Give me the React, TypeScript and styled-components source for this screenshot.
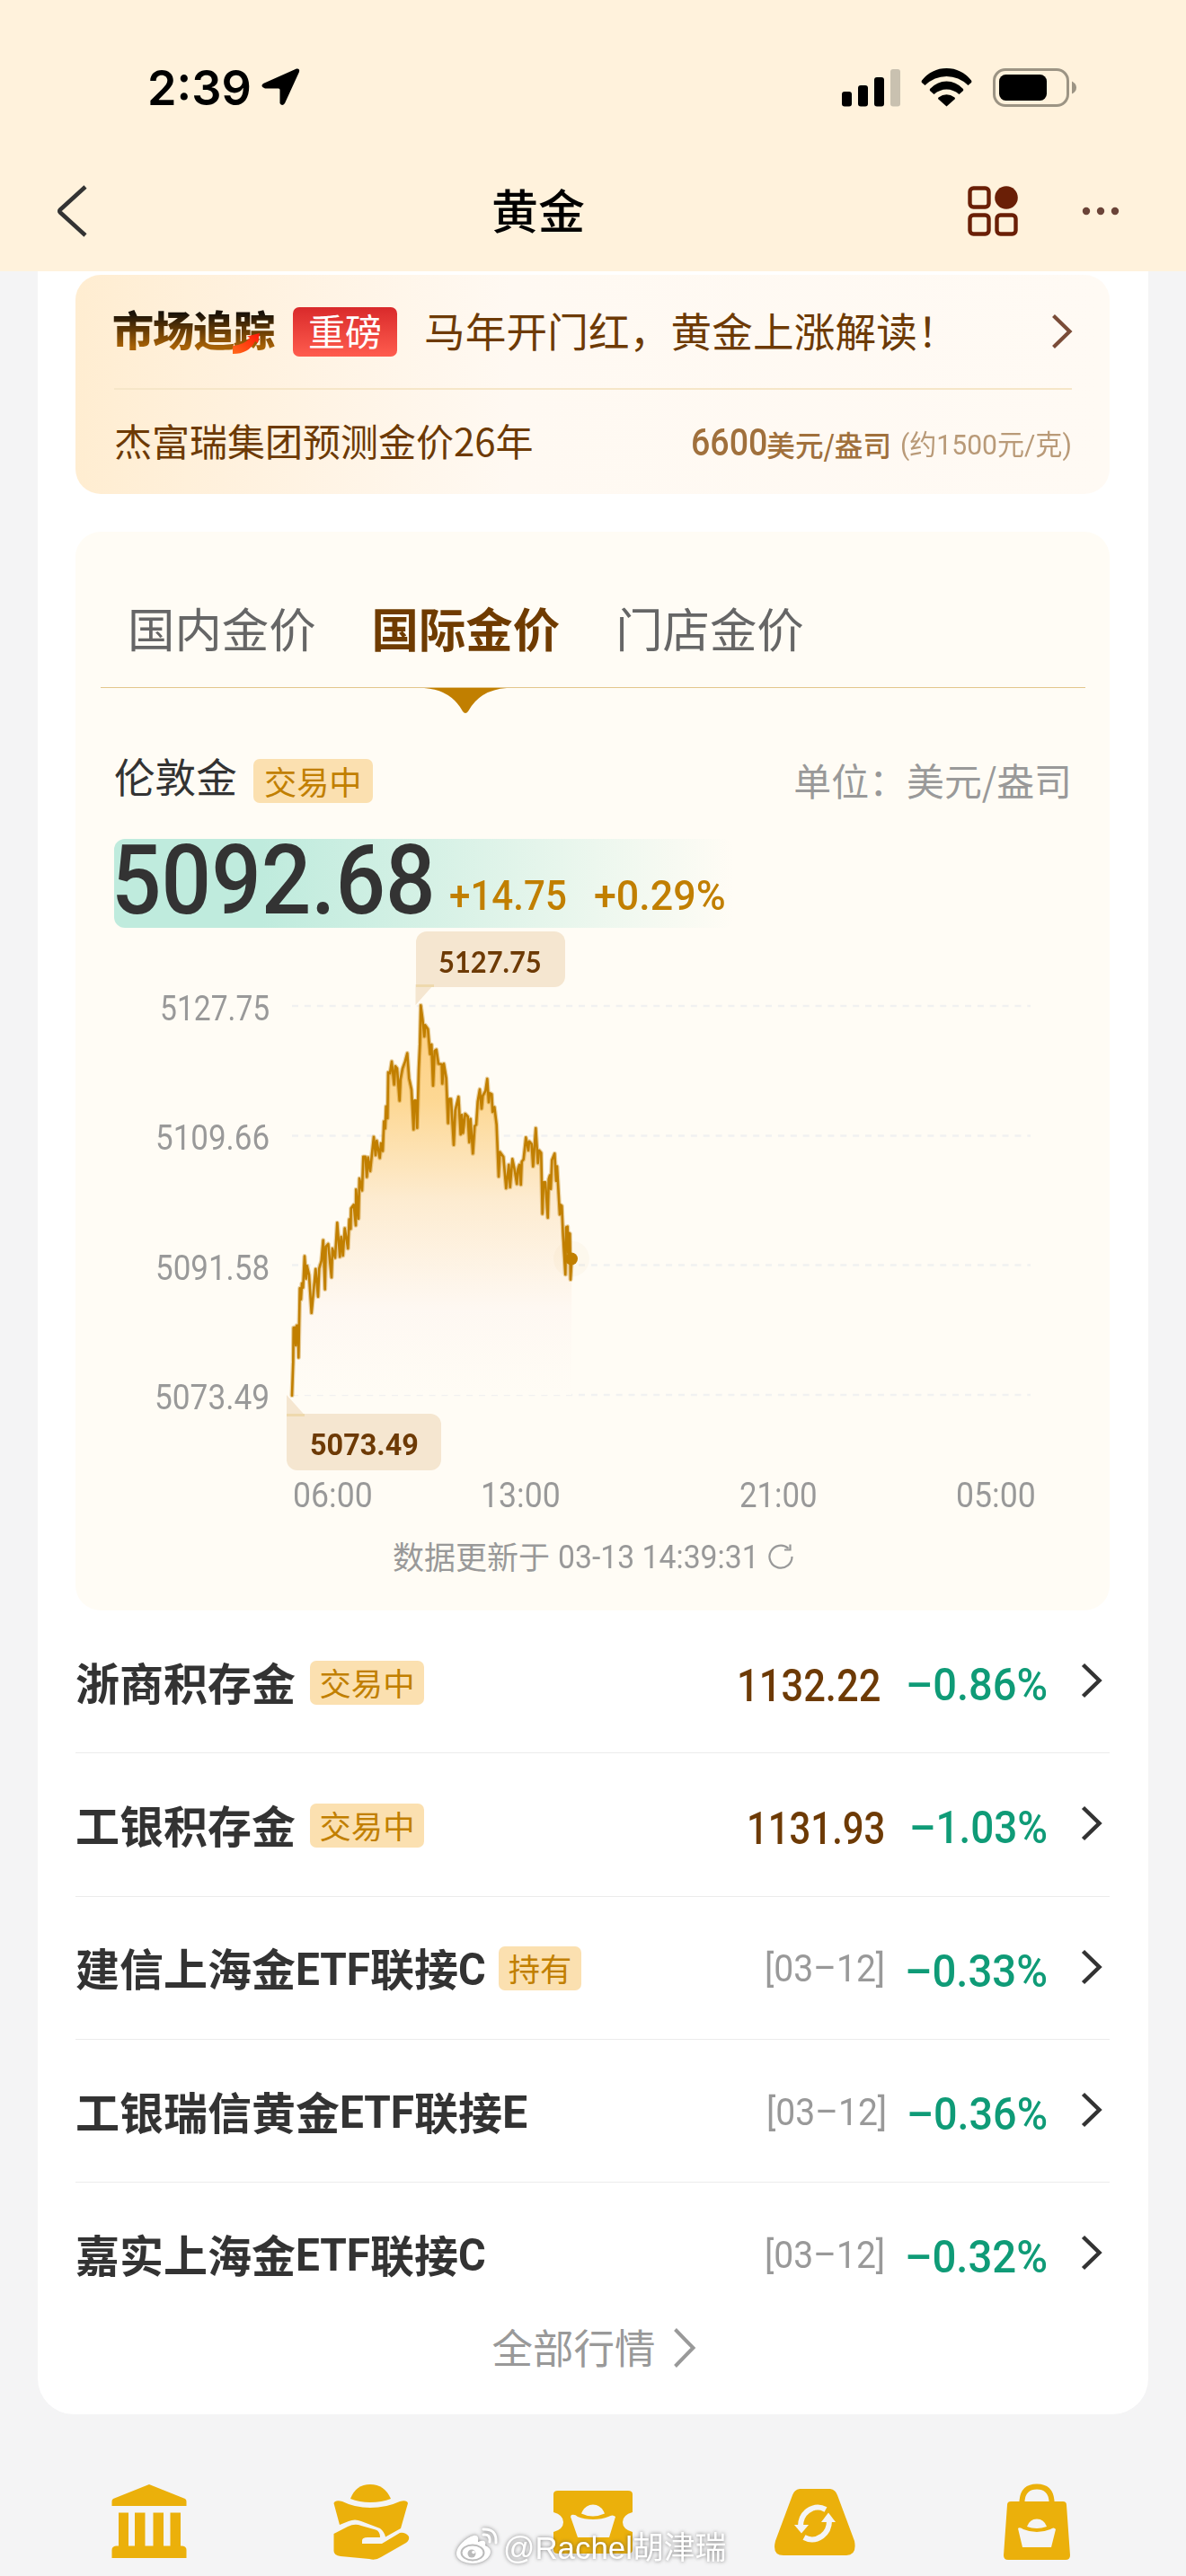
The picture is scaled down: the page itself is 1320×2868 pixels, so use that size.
import React, { useLayoutEffect, useRef, useState } from 'react';
import styled, { createGlobalStyle } from 'styled-components';

const GlobalStyle = createGlobalStyle`
  * { box-sizing: border-box; }
  body {
    margin: 0;
    background: #f4f4f5;
    font-family: "Noto Sans CJK SC", "Noto Sans", sans-serif;
  }
  svg { display: block; flex: none; overflow: visible; }
`;

const Page = styled.div`
  position: relative;
  width: 1320px;
  height: 2868px;
  overflow: hidden;
  background: #f4f4f5;
`;

/* ---------- fitted numerals ---------- */

const FitBox = styled.span<{ $w: number; $size: number; $color?: string; $weight?: number; $shift?: number; $font?: string }>`
  display: inline-block;
  flex: none;
  width: ${p => p.$w}px;
  height: ${p => p.$size}px;
  line-height: ${p => p.$size}px;
  font-family: ${p => p.$font ?? 'Roboto'}, "Noto Sans CJK SC", sans-serif;
  font-size: ${p => p.$size}px;
  font-weight: ${p => p.$weight ?? 500};
  color: ${p => p.$color ?? 'inherit'};
  margin-top: ${p => p.$shift ?? 0}px;
`;

const FitInner = styled.span`
  display: inline-block;
  white-space: nowrap;
  transform-origin: 0 50%;
`;

type FitProps = { text: string; w: number; size: number; color?: string; weight?: number; shift?: number; font?: string };

function Fit({ text, w, size, color, weight, shift, font }: FitProps) {
  const ref = useRef<HTMLSpanElement>(null);
  const [scale, setScale] = useState(1);
  useLayoutEffect(() => {
    if (ref.current) setScale(w / ref.current.offsetWidth);
  }, [text, w, size]);
  return (
    <FitBox $w={w} $size={size} $color={color} $weight={weight} $shift={shift} $font={font}>
      <FitInner ref={ref} style={{ transform: `scaleX(${scale})` }}>{text}</FitInner>
    </FitBox>
  );
}

/* ---------- header ---------- */

const Header = styled.header`
  height: 302px;
  background: #fff2dc;
`;

const StatusBar = styled.div`
  display: flex;
  align-items: center;
  height: 194px;
  padding: 0 122px 0 164px;
`;

const StatusRight = styled.div`
  display: flex;
  align-items: center;
  gap: 23px;
  margin-left: auto;
`;

const ArrowWrap = styled.div`
  margin-left: 10px;
`;

const NavBar = styled.div`
  display: grid;
  grid-template-columns: 485px auto 1fr;
  align-items: center;
  height: 82px;
  padding: 0 74px 0 62px;
`;

const Title = styled.h1`
  margin: -4px 0 0 0;
  font-size: 52px;
  line-height: 60px;
  font-weight: 500;
  color: #000;
`;

const NavActions = styled.div`
  display: flex;
  align-items: center;
  justify-content: flex-end;
  gap: 71px;
`;

const Chevron = ({ w, h, color, sw }: { w: number; h: number; color: string; sw: number }) => (
  <svg width={w} height={h} viewBox={`0 0 ${w} ${h}`} fill="none" stroke={color} strokeWidth={sw}>
    <path d={`M1.5 1.5 L${w - 2.5} ${h / 2} L1.5 ${h - 1.5}`} />
  </svg>
);

/* ---------- sheet ---------- */

const Sheet = styled.main`
  height: 2386px;
  margin: 0 42px;
  padding: 4px 43px 0 42px;
  background: #fff;
  border-radius: 0 0 40px 40px;
`;

const Banner = styled.section`
  height: 244px;
  padding: 0 42px 0 43px;
  border-radius: 28px;
  background: linear-gradient(90deg, #ffedd1 0%, #fff2e0 18%, #fff9f2 42%, #fffaf4 100%);
`;

const BannerTop = styled.div`
  display: flex;
  align-items: center;
  height: 128px;
  border-bottom: 2px solid #f6e6c8;
`;

const Logo = styled.div`
  position: relative;
  width: 184px;
  height: 56px;
`;

const LogoText = styled.div`
  font-size: 46px;
  font-weight: 900;
  line-height: 56px;
  letter-spacing: -1px;
  margin: -4px 0 0 -2px;
  white-space: nowrap;
  background: linear-gradient(180deg, #1a1208 22%, #5a3505 50%, #a86206 88%);
  background-clip: text;
  -webkit-background-clip: text;
  color: transparent;
`;

const LogoArrow = styled.svg`
  position: absolute;
  left: 132px;
  top: 30px;
`;

const HotBadge = styled.span`
  width: 116px;
  height: 55px;
  margin-left: 15px;
  border-radius: 7px;
  background: linear-gradient(180deg, #d92a2b, #ff5c4e);
  color: #fff;
  font-size: 41px;
  line-height: 51px;
  text-align: center;
`;

const Headline = styled.span`
  margin: -4px 0 0 30px;
  font-size: 45.6px;
  line-height: 60px;
  letter-spacing: 0.15px;
  color: #6d3a05;
  white-space: nowrap;
`;

const BannerChevron = styled.span`
  margin-left: auto;
`;

const BannerBottom = styled.div`
  display: flex;
  align-items: center;
  height: 115px;
`;

const Forecast = styled.span`
  margin-top: -3px;
  font-size: 42px;
  line-height: 60px;
  color: #6d3a05;
`;

const ForecastValue = styled.span`
  display: flex;
  align-items: center;
  margin-left: auto;
  white-space: nowrap;
`;

const Unit = styled.span`
  margin: 4px 10px 0 -1px;
  font-size: 31.6px;
  line-height: 40px;
  font-weight: 500;
  color: #a0703c;
`;

const GoldCard = styled.section`
  height: 1201px;
  margin-top: 42px;
  border-radius: 28px;
  background: #fffcf5;
`;

const Tabs = styled.div`
  display: flex;
  align-items: center;
  gap: 62px;
  height: 174px;
  margin: 0 27px 0 28px;
  padding: 44px 0 0 30px;
  border-bottom: 1px solid #e3c68c;
`;

const Tab = styled.div<{ $active?: boolean }>`
  position: relative;
  display: flex;
  align-items: center;
  height: 100%;
  padding-bottom: 5px;
  font-size: 52.4px;
  font-weight: ${p => (p.$active ? 700 : 400)};
  color: ${p => (p.$active ? '#6f3b00' : '#666')};
  white-space: nowrap;
`;

const TabMarker = styled.svg`
  position: absolute;
  left: 50%;
  bottom: -29px;
  margin-left: -46px;
`;

const QuoteHead = styled.div`
  display: flex;
  align-items: center;
  height: 50px;
  margin: 78px 42px 0 43px;
  line-height: 50px;
`;

const QuoteName = styled.span`
  margin-top: -12px;
  font-size: 45.6px;
  color: #333;
`;

const QuoteUnit = styled.span`
  margin: -3px 0 0 auto;
  font-size: 41.9px;
  color: #999;
`;

const Tag = styled.span<{ $w: number; $gap: number; $size: number }>`
  width: ${p => p.$w}px;
  height: 49px;
  margin-left: ${p => p.$gap}px;
  border-radius: 7px;
  background: #fbe0b0;
  color: #c17f00;
  font-size: ${p => p.$size}px;
  font-weight: 400;
  line-height: 48px;
  text-align: center;
  white-space: nowrap;
`;

const PriceStrip = styled.div`
  display: flex;
  width: 690px;
  height: 99px;
  margin: 40px 0 0 43px;
  border-radius: 12px;
  background: linear-gradient(90deg, #bfebdd 0%, #bfebdd 24%, rgba(191, 235, 221, 0) 100%);
`;

const Price = styled.span`
  margin-left: -3px;
`;

const ChangeRow = styled.span`
  display: flex;
  gap: 30px;
  margin: 40px 0 0 15px;
`;

const Chart = styled.div`
  display: grid;
  grid-template-columns: 216px 1fr;
  height: 604px;
`;

const YAxis = styled.div`
  display: flex;
  flex-direction: column;
  align-items: flex-end;
  justify-content: space-between;
  height: 472px;
  margin-top: 70.5px;
`;

const Plot = styled.div`
  position: relative;
`;

const Tip = styled.div<{ $x: number; $y: number; $w: number; $h: number; $corner: string }>`
  position: absolute;
  left: ${p => p.$x}px;
  top: ${p => p.$y}px;
  width: ${p => p.$w}px;
  height: ${p => p.$h}px;
  display: flex;
  align-items: center;
  justify-content: center;
  border-radius: ${p => p.$corner};
  background: #f5e6d0;
  color: #6d3a05;
`;

const XAxis = styled.div`
  display: grid;
  grid-template-columns: 208.5px 288px 241.5px 90px;
  align-items: center;
  height: 55px;
  padding-left: 242px;
`;

const Updated = styled.div`
  display: flex;
  align-items: center;
  justify-content: center;
  height: 82px;
  color: #999;
  font-size: 35px;
  line-height: 50px;
`;

const UpdatedLabel = styled.span`
  margin: -3px 9px 0 1px;
`;

const Row = styled.div`
  display: flex;
  align-items: center;
  height: 159.3px;
  padding: 2px 9px 0 0;
  border-bottom: 1px solid #ebebeb;
  &:last-child { border-bottom-color: transparent; }
`;

const RowName = styled.span`
  display: flex;
  align-items: center;
  margin-top: -3px;
  font-size: 49px;
  line-height: 60px;
  font-weight: 700;
  color: #333;
  white-space: nowrap;
`;

const RowValues = styled.span`
  display: flex;
  align-items: center;
  margin-left: auto;
`;

const RowChevron = styled.span`
  margin: -4px 0 0 38px;
`;

const More = styled.div`
  display: flex;
  align-items: center;
  justify-content: center;
  gap: 20px;
  height: 50px;
  padding-left: 2px;
  color: #999;
  font-size: 45.5px;
  line-height: 50px;
`;

const MoreLabel = styled.span`
  margin-top: -5px;
`;

const BottomNav = styled.nav`
  display: grid;
  grid-template-columns: repeat(5, 247px);
  justify-items: center;
  margin: 78px 42px 0;
`;

const Watermark = styled.div`
  position: absolute;
  left: 508px;
  top: 2813px;
  display: flex;
  align-items: center;
  gap: 5px;
  color: #fff;
  filter: drop-shadow(0 0 2px rgba(60, 60, 60, 0.65));
`;

/* ---------- chart data ---------- */

/* raw samples as x,y pairs; x is in thirds of a pixel, y in 1/2.8 of a pixel */
const SAMPLES = `75,1494 79,1390 80,1283 84,1282 88,1338 91,1276 95,1276 97,1376 101,1160 105,1195 108,1145 112,1158
117,1060 122,1130 125,1090 132,1118 140,1237 148,1160 154,1100 162,1186 166,1098 173,1075 179,1010 185,1163 188,1030
196,1022 207,1126 210,1036 219,1065 226,956 235,1062 239,1000 245,1058 251,973 262,1036 266,945 271,975 272,911 281,900
288,964 289,852 297,943 300,818 309,855 313,750 320,750 325,813 329,752 336,795 342,740 348,688 354,745 358,700 368,754
372,708 378,732 382,640 386,662 389,593 394,630 396,487 402,490 408,453 416,525 420,468 426,475 434,575 437,510 444,475
453,452 460,427 466,505 474,540 481,665 484,575 489,575 493,660 498,480 502,400 505,278 511,320 517,375 520,340 529,352
536,430 541,400 546,528 551,420 557,416 564,460 575,462 577,522 582,460 590,505 596,645 599,570 606,570 615,713 620,605
631,563 638,680 642,620 646,676 653,616 662,625 667,705 671,632 679,740 685,655 690,650 695,578 702,540 708,600 712,560
721,545 727,507 732,580 735,552 742,555 745,610 751,595 758,650 765,812 769,735 781,750 790,848 799,775 803,845 811,757
818,790 826,835 829,790 834,775 839,837 842,765 848,758 856,690 864,730 867,702 875,710 880,780 889,661 896,770 900,730
907,738 911,928 915,830 921,830 929,940 932,820 936,808 939,850 943,760 952,740 957,825 960,780 969,930 971,900 976,903
980,995 988,1117 990,970 995,968 997,1050 1000,988 1003,990 1005,1133 1009,1070`;

const POINTS = SAMPLES.split(/\s+/).map(p => {
  const [x, y] = p.split(',').map(Number);
  return [x / 3, y / 2.8 - 13];
});
const LINE = 'M' + POINTS.map(([x, y]) => `${x.toFixed(1)} ${y.toFixed(1)}`).join('L');
const GRID = [87, 231.5, 375.5, 520];

const PriceChart = () => (
  <svg width="908" height="604" viewBox="0 0 908 604" fill="none">
    <defs>
      <linearGradient id="area" x1="0" y1="87" x2="0" y2="520" gradientUnits="userSpaceOnUse">
        <stop offset="0" stopColor="#fdcd7c" />
        <stop offset="0.24" stopColor="#fdd68f" />
        <stop offset="0.5" stopColor="#fdebcf" />
        <stop offset="0.78" stopColor="#fef8f2" />
        <stop offset="1" stopColor="#fffcf5" />
      </linearGradient>
    </defs>
    {GRID.map(y => (
      <path key={y} d={`M25 ${y}H847`} stroke="#f1f1f1" strokeWidth="2.4" strokeDasharray="7 6.87" />
    ))}
    <path d={`${LINE}L336 520L25 520Z`} fill="url(#area)" fillOpacity="0.96" />
    <circle cx="336" cy="368.5" r="20" fill="#c17f00" fillOpacity="0.03" />
    <path d={LINE} stroke="#c17f00" strokeOpacity="0.35" strokeWidth="5" strokeLinejoin="round" strokeLinecap="round" />
    <path d={LINE} stroke="#c17f00" strokeWidth="2.6" strokeLinejoin="round" strokeLinecap="round" />
    <circle cx="336" cy="368.5" r="7" fill="#c17f00" />
    <path d="M162.5 63H183L162.5 86Z" fill="#f5e6d0" />
    <path d="M19 520L40 543.5H19Z" fill="#f5e6d0" />
  </svg>
);

/* the strip where a tip's pointer runs under its bubble */
const TipSeam = styled.i<{ $top?: boolean }>`
  position: absolute;
  left: 0;
  ${p => (p.$top ? 'top: 0;' : 'bottom: 0;')}
  width: 20px;
  height: 3px;
  background: #eed9ad;
`;

/* ---------- bottom icons (84 x 84 boxes) ---------- */

const GOLD = '#ebb00b';

const BankIcon = () => (
  <svg width="84" height="84" viewBox="0 0 84 84" fill={GOLD}>
    <path d="M42 0L82 16Q83.500 17 83.500 19V24H0.500V19Q0.500 17 2 16Z" />
    <path d="M8 31.500H19V69H8ZM26 31.500H37.500V69H26ZM46.500 31.500H58V69H46.500ZM65.500 31.500H77V69H65.500Z" />
    <path d="M5 68.500H79Q83.500 69 83.500 73V82H0.500V73Q0.500 69 5 68.500Z" />
  </svg>
);

const HandIcon = () => (
  <svg width="84" height="84" viewBox="0 0 84 84" fill={GOLD}>
    <path d="M19 16Q25 0 41 0Q57 0 64 16Q54 20 41 20Q29 20 19 16Z" />
    <path d="M0.500 21Q2 17 10 19Q24 26 41 26Q59 26 74 19Q82 17 83 21L75 49L58 58.500Q57 53 52 49L31 41Q24 38 17 41L7 45Z" />
    <path d="M0.500 55L16 47Q24 43 31 46L47 50.500Q52 52 52 59H38Q32 59 32 62.500V66H54L74 54Q80 53 84 58Q85 62 81 65L53 81Q47 85 40 83L8 80Q0.500 79 0.500 74Z" />
  </svg>
);

const TicketIcon = () => (
  <svg width="88" height="84" viewBox="0 0 88 84">
    <path fill={GOLD} d="M5 7H83Q88 7 88 11V31Q77 34 77 42Q77 50 88 53V73Q88 77 83 77H5Q0 77 0 73V53Q11 50 11 42Q11 34 0 31V11Q0 7 5 7Z" />
    <path fill="#f4f4f5" d="M31 32.500Q35 22.500 44 22.500Q53 22.500 57 32.500Q50 35.500 44 35.500Q37 35.500 31 32.500Z" />
    <path fill="#f4f4f5" d="M20 34Q24 33 27 36Q34 39 44 39Q54 39 61 36Q66 33 69 36L62 59H27L19 36Z" />
  </svg>
);

const RecycleIcon = () => (
  <svg width="90" height="84" viewBox="0 0 90 84">
    <path fill={GOLD} d="M28 5H62Q68 6 70 12L89 63Q92 79 80 79H10Q-3 79 1 63L20 12Q22 6 28 5Z" />
    <g transform="translate(45 43.5)" fill="none" stroke="#f4f4f5" strokeWidth="6">
      <path d="M12 -15.500Q2 -21 -8 -14Q-16 -8 -16 3" />
      <path d="M-12 15.500Q-2 21 8 14Q16 8 16 -3" />
      <path d="M-23 1.500H-7L-15 11Z" fill="#f4f4f5" stroke="none" />
      <path d="M23 -1.500H7L15 -12Z" fill="#f4f4f5" stroke="none" />
    </g>
  </svg>
);

const BagIcon = () => (
  <svg width="74" height="84" viewBox="0 0 74 84">
    <path d="M20.500 22V18Q22 2.500 37 2.500Q52 2.500 53.500 18V22" fill="none" stroke={GOLD} strokeWidth="6" />
    <path fill={GOLD} d="M8 19H66Q70 19 70 23L74 79Q74 84 69 84H5Q0 84 0 79L4 23Q4 19 8 19Z" />
    <path fill="#f4f4f5" d="M26 47Q29 38.500 37 38.500Q45 38.500 48 47Q42 49 37 49Q31 49 26 47Z" />
    <path fill="#f4f4f5" d="M16 49Q18 47 22 50Q29 53 37 53Q45 53 52 50Q56 47 58 50L53 70H21Z" />
  </svg>
);

const WeiboIcon = () => (
  <svg width="47" height="42" viewBox="0 0 47 42">
    <path fill="#fff" d="M19 10C11 12 0 22 0 30C0 37 9 41 18 41C30 41 38 34 38 28C38 24 34 22 32 21C33 17 32 14 24 17C25 13 24 9 19 10Z" />
    <ellipse cx="18" cy="29" rx="12.500" ry="8.500" fill="none" stroke="#bbb" strokeWidth="2" />
    <circle cx="17" cy="30" r="4.500" fill="#bbb" />
    <circle cx="19" cy="28.500" r="1.800" fill="#fff" />
    <path d="M30 9Q38 8 37 17M30 3Q45 2 44 18" fill="none" stroke="#fff" strokeWidth="3" strokeLinecap="round" />
  </svg>
);

/* ---------- rows ---------- */

type RowData = {
  head: string; latin?: string; latinW?: number; tail?: string; last?: string; lastW?: number;
  tag?: string; price?: string; priceW?: number; date?: string; pct: string; pctW: number; gap: number;
};

const ROWS: RowData[] = [
  { head: '浙商积存金', tag: '交易中', price: '1132.22', priceW: 160, pct: '–0.86%', pctW: 158, gap: 28 },
  { head: '工银积存金', tag: '交易中', price: '1131.93', priceW: 154, pct: '–1.03%', pctW: 154, gap: 27 },
  { head: '建信上海金', latin: 'ETF', latinW: 83, tail: '联接', last: 'C', lastW: 31, tag: '持有', date: '[03–12]', pct: '–0.33%', pctW: 159, gap: 22 },
  { head: '工银瑞信黄金', latin: 'ETF', latinW: 83, tail: '联接', last: 'E', lastW: 28, date: '[03–12]', pct: '–0.36%', pctW: 157, gap: 22 },
  { head: '嘉实上海金', latin: 'ETF', latinW: 83, tail: '联接', last: 'C', lastW: 31, date: '[03–12]', pct: '–0.32%', pctW: 159, gap: 22 },
];

const Gap = styled.span<{ $w: number }>`
  width: ${p => p.$w}px;
`;

const MarketRow = ({ d }: { d: RowData }) => (
  <Row>
    <RowName>
      {d.head}
      {d.latin && <Fit text={d.latin} w={d.latinW!} size={50} weight={700} shift={5} />}
      {d.tail}
      {d.last && <Fit text={d.last} w={d.lastW!} size={50} weight={700} shift={5} />}
    </RowName>
    {d.tag && <Tag $w={d.tag.length === 3 ? 127 : 92} $gap={d.tag.length === 3 ? 16 : 14} $size={35.3}>{d.tag}</Tag>}
    <RowValues>
      {d.price && <Fit text={d.price} w={d.priceW!} size={50} color="#6d3a05" shift={7} />}
      {d.date && <Fit text={d.date} w={134} size={42} color="#999" weight={400} shift={1} />}
      <Gap $w={d.gap} />
      <Fit text={d.pct} w={d.pctW} size={50} color="#0f9b77" shift={6} />
      <RowChevron><Chevron w={22} h={38} color="#333" sw={4.5} /></RowChevron>
    </RowValues>
  </Row>
);

export default function App() {
  return (
    <Page>
      <GlobalStyle />
      <Header>
        <StatusBar>
          <Fit text="2:39" w={116} size={54} weight={600} font="Inter" shift={1} />
          <ArrowWrap>
            <svg width="44" height="42" viewBox="0 0 44 42"><path d="M40 0.500Q44 0 43 4L27 39Q24 43 21.500 39V24Q21.500 22.500 20 22.500H5Q-1 20 3 17Z" /></svg>
          </ArrowWrap>
          <StatusRight>
            <svg width="65" height="43" viewBox="0 0 65 43">
              <rect x="0" y="26" width="11" height="16.500" rx="3" />
              <rect x="18" y="19" width="11" height="23.500" rx="3" />
              <rect x="36" y="10" width="11" height="32.500" rx="3" />
              <rect x="54" y="1" width="11" height="41.500" rx="3" fill="#c9c1b0" />
            </svg>
            <svg width="57" height="43" viewBox="0 0 57 43">
              <path d="M1 13.500Q12 0 28.500 0Q45 0 56 13.500Q57 15 56 16L52.500 19Q42 9 28.500 9Q15 9 4.500 19L1 16Q0 15 1 13.500Z" />
              <path d="M10 23Q18 14.500 28.500 14.500Q39 14.500 47 23Q47.500 24 47 25L42.500 29Q36 23.500 28.500 23.500Q21 23.500 14.500 29L10 25Q9.500 24 10 23Z" />
              <path d="M19.500 32.500Q28.500 26 37.500 32.500Q38.500 33.500 37.500 34.500L28.500 42.500L19.500 34.500Q18.500 33.500 19.500 32.500Z" />
            </svg>
            <svg width="93" height="43" viewBox="0 0 93 43">
              <rect x="1.500" y="1.500" width="82" height="40" rx="12.500" fill="none" stroke="#9c9484" strokeWidth="3" />
              <rect x="7" y="7" width="53" height="29" rx="7.500" />
              <path d="M88 14.500Q93 17 93 21.500Q93 26 88 28.500Z" fill="#9c9484" />
            </svg>
          </StatusRight>
        </StatusBar>
        <NavBar>
          <svg width="36" height="58" viewBox="0 0 36 58" fill="none" stroke="#333" strokeWidth="4.600">
            <path d="M33 2L5 27.500Q3.500 29 5 30.500L33 56" />
          </svg>
          <Title>黄金</Title>
          <NavActions>
            <svg width="56" height="56" viewBox="0 0 56 56" fill="none" stroke="#6a1f06" strokeWidth="4.400">
              <rect x="2.500" y="2.500" width="21" height="21" rx="4" />
              <rect x="2.500" y="32.500" width="21" height="21" rx="4" />
              <rect x="32.500" y="32.500" width="21" height="21" rx="4" />
              <circle cx="43" cy="13" r="12.800" fill="#6a1f06" stroke="none" />
            </svg>
            <svg width="42" height="10" viewBox="0 0 42 10" fill="#6b4438">
              <circle cx="5" cy="5" r="4.200" /><circle cx="21" cy="5" r="4.200" /><circle cx="37" cy="5" r="4.200" />
            </svg>
          </NavActions>
        </NavBar>
      </Header>

      <Sheet>
        <Banner>
          <BannerTop>
            <Logo>
              <LogoText>市场追踪</LogoText>
              <LogoArrow width="32" height="24" viewBox="0 0 32 24">
                <defs>
                  <linearGradient id="flame" x1="0" y1="1" x2="1" y2="0">
                    <stop offset="0" stopColor="#ff6a1a" /><stop offset="1" stopColor="#ff1708" />
                  </linearGradient>
                </defs>
                <path d="M0 14Q13 13 19 5L16 3.500L30 0L28 11L25 9Q18 23 0 23Z" fill="url(#flame)" />
              </LogoArrow>
            </Logo>
            <HotBadge>重磅</HotBadge>
            <Headline>马年开门红，黄金上涨解读！</Headline>
            <BannerChevron><Chevron w={22} h={38} color="#7a4c38" sw={4.2} /></BannerChevron>
          </BannerTop>
          <BannerBottom>
            <Forecast>杰富瑞集团预测金价26年</Forecast>
            <ForecastValue>
              <Fit text="6600" w={85} size={42} color="#a0703c" weight={500} shift={3} />
              <Unit>美元/盎司</Unit>
              <Fit text="(约1500元/克)" w={191} size={31} color="#b99a78" weight={400} shift={8} />
            </ForecastValue>
          </BannerBottom>
        </Banner>

        <GoldCard>
          <Tabs>
            <Tab>国内金价</Tab>
            <Tab $active>
              国际金价
              <TabMarker width="92" height="28" viewBox="0 0 92 28">
                <path d="M0 0H92Q62 2 49 26Q46 30 43 26Q30 2 0 0Z" fill="#c17f00" />
              </TabMarker>
            </Tab>
            <Tab>门店金价</Tab>
          </Tabs>
          <QuoteHead>
            <QuoteName>伦敦金</QuoteName>
            <Tag $w={133} $gap={18} $size={36.2}>交易中</Tag>
            <QuoteUnit>单位：美元/盎司</QuoteUnit>
          </QuoteHead>
          <PriceStrip>
            <Price><Fit text="5092.68" w={361} size={107} color="#333" weight={500} shift={-7} /></Price>
            <ChangeRow>
              <Fit text="+14.75" w={131} size={46} color="#c17f00" />
              <Fit text="+0.29%" w={147} size={46} color="#c17f00" />
            </ChangeRow>
          </PriceStrip>
          <Chart>
            <YAxis>
              <Fit text="5127.75" w={122} size={38} color="#999" weight={400} />
              <Fit text="5109.66" w={127} size={38} color="#999" weight={400} />
              <Fit text="5091.58" w={127} size={38} color="#999" weight={400} />
              <Fit text="5073.49" w={128} size={38} color="#999" weight={400} />
            </YAxis>
            <Plot>
              <PriceChart />
              <Tip $x={162.5} $y={4} $w={166.5} $h={61.5} $corner="12px 12px 12px 0">
                <TipSeam />
                <Fit text="5127.75" w={115} size={33} weight={700} shift={5} font="Lato" />
              </Tip>
              <Tip $x={19} $y={541} $w={172} $h={63} $corner="0 12px 12px 12px">
                <TipSeam $top />
                <Fit text="5073.49" w={121} size={34} weight={700} shift={5} />
              </Tip>
            </Plot>
          </Chart>
          <XAxis>
            <Fit text="06:00" w={89} size={38} color="#999" weight={400} />
            <Fit text="13:00" w={89} size={38} color="#999" weight={400} />
            <Fit text="21:00" w={87} size={38} color="#999" weight={400} />
            <Fit text="05:00" w={89} size={38} color="#999" weight={400} />
          </XAxis>
          <Updated>
            <UpdatedLabel>数据更新于</UpdatedLabel>
            <Fit text="03-13 14:39:31" w={224} size={36} weight={400} shift={1} />
            <Gap $w={10} />
            <svg width="28" height="28" viewBox="0 0 28 28" fill="none" stroke="#999" strokeWidth="2.200">
              <path d="M26.500 14A12.500 12.500 0 1 1 22.500 5" />
              <path d="M24.500 0.500V6.500H18" />
            </svg>
          </Updated>
        </GoldCard>

        <div>
          {ROWS.map(d => <MarketRow key={d.head} d={d} />)}
        </div>
        <More>
          <MoreLabel>全部行情</MoreLabel>
          <Chevron w={24} h={44} color="#999" sw={4} />
        </More>
      </Sheet>

      <BottomNav>
        <BankIcon />
        <HandIcon />
        <TicketIcon />
        <RecycleIcon />
        <BagIcon />
      </BottomNav>
      <Watermark>
        <WeiboIcon />
        <Fit text="@Rachel胡津瑞" w={248} size={35} weight={400} shift={4} font="'Liberation Sans'" />
      </Watermark>
    </Page>
  );
}
